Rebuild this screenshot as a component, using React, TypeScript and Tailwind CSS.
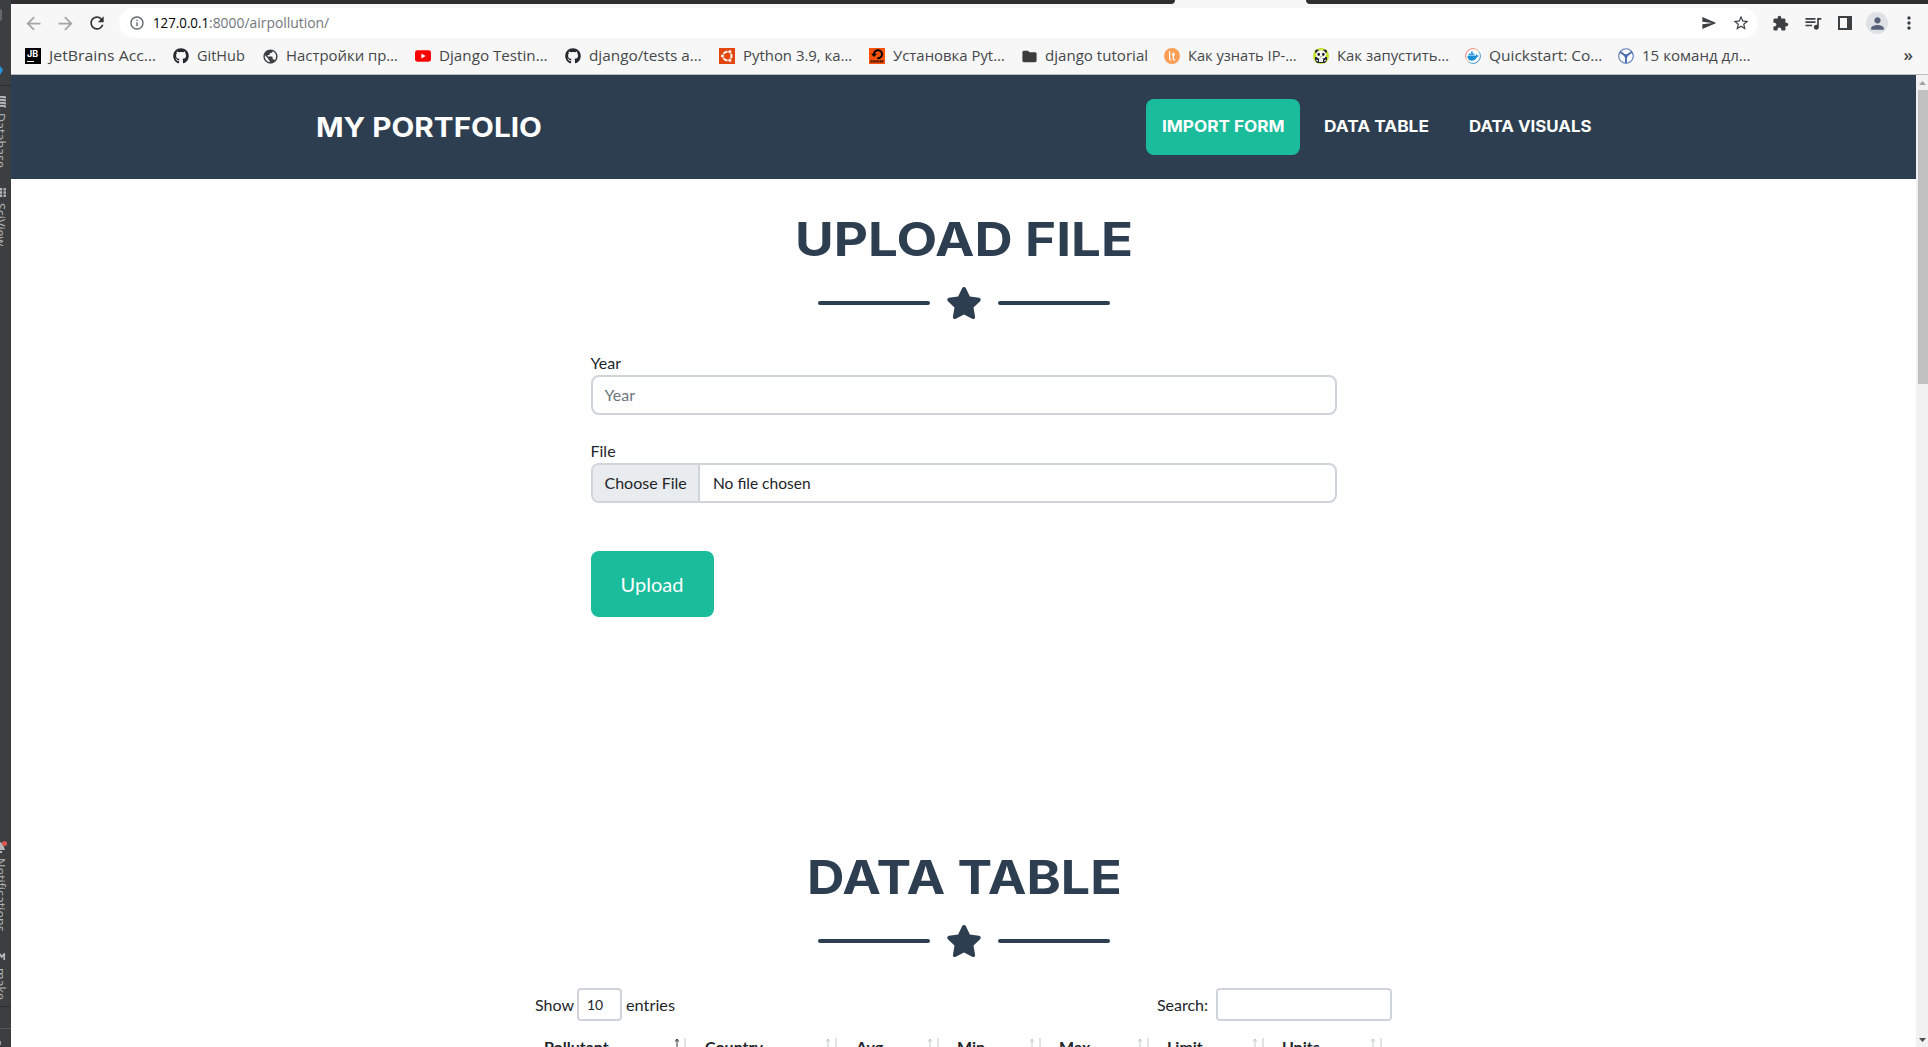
import { useLayoutEffect, useRef, useState, type ReactNode } from "react";
import { FaGithub, FaStar } from "react-icons/fa";
import { MdArrowBack, MdArrowForward, MdRefresh, MdInfoOutline, MdSend, MdStarBorder, MdExtension, MdQueueMusic, MdMoreVert, MdPerson, MdPublic, MdFolder } from "react-icons/md";

/* Text that is stretched horizontally to fill a given width. */
function Fit({ w, className = "", children }: { w: number; className?: string; children: ReactNode }) {
  const ref = useRef<HTMLSpanElement>(null);
  const [scale, setScale] = useState(1);
  useLayoutEffect(() => {
    if (ref.current) setScale(w / ref.current.offsetWidth);
  }, [w]);
  return (
    <span className="inline-flex shrink-0" style={{ width: w }}>
      <span ref={ref} className={"inline-block shrink-0 origin-left whitespace-nowrap " + className} style={{ transform: `scaleX(${scale})` }}>
        {children}
      </span>
    </span>
  );
}

const JetBrainsIcon = () => (
  <span className="flex h-4 w-4 flex-col bg-black pl-[2px] pt-[1px] font-['Inter'] text-[9px] font-bold leading-[9px] text-white">
    JB
    <span className="mt-[3px] h-px w-[7px] shrink-0 bg-white" />
  </span>
);
const YoutubeIcon = () => (
  <svg viewBox="0 0 16 16" className="h-4 w-4"><rect y="2.3" width="16" height="11.4" rx="2.4" fill="#f00" /><path d="M6.4 5.6v4.8L10.6 8z" fill="#fff" /></svg>
);
const UbuntuIcon = () => (
  <svg viewBox="0 0 16 16" className="h-4 w-4">
    <rect width="16" height="16" fill="#e2470f" />
    <circle cx="8.3" cy="8" r="4.2" fill="none" stroke="#fff" strokeWidth="2" />
    <g fill="#fff" stroke="#e2470f" strokeWidth="1"><circle cx="3.4" cy="8" r="2" /><circle cx="10.8" cy="3.7" r="2" /><circle cx="10.8" cy="12.3" r="2" /></g>
  </svg>
);
const SetupIcon = () => (
  <svg viewBox="0 0 16 16" className="h-4 w-4">
    <rect width="16" height="16" fill="#f95208" />
    <path d="M5 6.2a4 4 0 1 1 3.2 3.9" fill="none" stroke="#000" strokeWidth="1.9" />
    <path d="M2 5.7h6L5 9z" fill="#000" />
    <path d="M1.5 13.4h13" stroke="#3a1200" strokeWidth="2.4" strokeDasharray="1.4 .5" />
  </svg>
);
const LtIcon = () => (
  <svg viewBox="0 0 16 16" className="h-4 w-4">
    <circle cx="8" cy="8" r="8" fill="#ff9f55" />
    <path d="M5.6 3.3v7.3q0 1.6 1.4 1.6M9.3 4.5v6q0 1.7 1.9 1.4M7.7 6.5h3.4" fill="none" stroke="#fff" strokeWidth="1.3" />
  </svg>
);
const PandaIcon = () => (
  <svg viewBox="0 0 16 16" className="h-4 w-4">
    <circle cx="8" cy="8" r="8" fill="#c6e02c" />
    <path d="M2 9h12v3l-2 3H4l-2-3z" fill="#232a3a" />
    <circle cx="4" cy="3.4" r="2" fill="#222" /><circle cx="12" cy="3.4" r="2" fill="#222" />
    <ellipse cx="8" cy="6.6" rx="5.2" ry="4.4" fill="#f4f4f4" />
    <ellipse cx="5.7" cy="6.3" rx="1.3" ry="1.6" fill="#222" /><ellipse cx="10.3" cy="6.3" rx="1.3" ry="1.6" fill="#222" />
    <path d="M7.2 8.4h1.6L8 9.4z" fill="#222" /><path d="M6 11h4v3H6z" fill="#eee" /><path d="M3 12l2 1M13 12l-2 1" stroke="#fff" />
  </svg>
);
const DockerIcon = () => (
  <svg viewBox="0 0 16 16" className="h-4 w-4">
    <defs><linearGradient id="ring" x1="0" y1="0" x2="1" y2="1"><stop stopColor="#f0506e" /><stop offset=".45" stopColor="#f8b48a" /><stop offset=".6" stopColor="#52c5dc" /><stop offset="1" stopColor="#314a9c" /></linearGradient></defs>
    <circle cx="8" cy="8" r="7.4" fill="#fff" stroke="url(#ring)" />
    <path d="M2.3 7.8h8.5q0-1 .5-1.8.9.6 1 1.5 1-.1 1.7.3-.6 1-2 1.1-1.5 3.8-5.6 3.8-3.7 0-4.1-4.9z" fill="#1b8fd6" />
    <path d="M3.6 5.6h5.9v2H3.6zM6 3.5h1.9v2H6z" fill="#3aa4e3" />
  </svg>
);
const WheelIcon = () => (
  <svg viewBox="0 0 16 16" className="h-4 w-4">
    <circle cx="8" cy="8" r="7.3" fill="#fbfcff" stroke="#5878b4" strokeWidth="1.1" />
    <path d="M2 3.8l4.7 3.5M14 3.8L9.3 7.3M8 9v6.2" stroke="#4669ac" strokeWidth="1.8" /><circle cx="8" cy="7.8" r="1.9" fill="#4669ac" />
  </svg>
);
const GithubIcon = () => <FaGithub className="h-4 w-4 text-[#24292f]" />;
const GlobeIcon = () => <MdPublic className="h-[17px] w-[17px] shrink-0 text-[#3c4043]" />;
const FolderIcon = () => <MdFolder className="h-[17px] w-[17px] shrink-0 text-[#3c3c3c]" />;

/* pitch: distance to the next bookmark, w: label width */
const bookmarks = [
  { icon: JetBrainsIcon, label: "JetBrains Acc…", w: 107, pitch: 148 },
  { icon: GithubIcon, label: "GitHub", w: 48, pitch: 89 },
  { icon: GlobeIcon, label: "Настройки пр…", w: 112, pitch: 153 },
  { icon: YoutubeIcon, label: "Django Testin…", w: 109, pitch: 150 },
  { icon: GithubIcon, label: "django/tests a…", w: 113, pitch: 154 },
  { icon: UbuntuIcon, label: "Python 3.9, ка…", w: 109, pitch: 150 },
  { icon: SetupIcon, label: "Установка Pyt…", w: 112, pitch: 152 },
  { icon: FolderIcon, label: "django tutorial", w: 103, pitch: 143 },
  { icon: LtIcon, label: "Как узнать IP-…", w: 109, pitch: 149 },
  { icon: PandaIcon, label: "Как запустить…", w: 112, pitch: 152 },
  { icon: DockerIcon, label: "Quickstart: Co…", w: 113, pitch: 153 },
  { icon: WheelIcon, label: "15 команд дл…", w: 108, pitch: 149 },
];

function SideLabel({ text, className }: { text: string; className: string }) {
  return (
    <div className={"flex w-[11px] shrink-0 " + className}>
      <span className="-ml-[9px] shrink-0 whitespace-nowrap text-[12.5px] leading-[18px] text-[#b4b6b8] [writing-mode:vertical-rl]">{text}</span>
    </div>
  );
}

function IdeStrip() {
  return (
    <aside className="flex h-full w-[11px] shrink-0 flex-col overflow-hidden bg-[#3c3f41] font-['Open_Sans',sans-serif]">
      <div className="mt-[9px] h-3 w-[2px] shrink-0 rounded-r-full bg-[#66686a]" />
      <svg viewBox="0 0 4 10" className="mt-[45px] h-[10px] w-1 shrink-0"><path d="M0 0l3 4-3 5z" fill="#2597e0" /></svg>
      <div className="mt-[9px] h-px shrink-0 bg-[#2b2d2e]" />
      <svg viewBox="0 0 6 13" className="mt-[10px] h-[13px] w-[6px] shrink-0"><path d="M0 1q3-1 6 1M0 4q3-1 6 1M0 7q3-1 6 1M0 10q3-1 6 1" stroke="#b5b7b9" strokeWidth="2" fill="none" /></svg>
      <SideLabel text="Database" className="mt-[4px] h-[54px]" />
      <svg viewBox="0 0 6 9" className="mt-[21px] h-[9px] w-[6px] shrink-0"><path d="M1 0v9M4.7 0v9" stroke="#b5b7b9" strokeWidth="2.3" strokeDasharray="2.4 .9" /></svg>
      <SideLabel text="SciView" className="mt-[6px] h-[50px]" />
      <svg viewBox="0 0 8 14" className="mt-[587px] h-[14px] w-2 shrink-0"><path d="M0 2l3 2 2 6H0zM0 11h2v2H0z" fill="#b5b7b9" /><circle cx="4.5" cy="3.5" r="2.6" fill="#d9534f" /></svg>
      <SideLabel text="Notifications" className="mt-[4px] h-[80px]" />
      <svg viewBox="0 0 6 8" className="mt-[15px] h-2 w-[6px] shrink-0"><path d="M0 1l1.7 3L4.2 1v6" stroke="#b5b7b9" strokeWidth="1.7" fill="none" /></svg>
      <SideLabel text="make" className="mt-[7px] h-[34px]" />
      <div className="mt-[4px] h-px shrink-0 bg-[#2b2d2e]" />
      <div className="mt-[21px] h-px shrink-0 bg-[#55585a]" />
      <div className="mt-[12px] h-1 w-px shrink-0 bg-[#999]" />
    </aside>
  );
}

function BrowserBar() {
  return (
    <div className="h-[75px] shrink-0 border-b border-[#b9bcbc] bg-[#f7f7f7] font-['Open_Sans','Noto_Sans',sans-serif]">
      <div className="flex h-1 justify-between">
        <div className="w-[1164px] rounded-br-[4px] bg-[#302e30]" />
        <div className="w-[622px] rounded-bl-[4px] bg-[#302e30]" />
      </div>
      <div className="flex h-[38px] items-center pl-[12px] text-[#3c4043]">
        <MdArrowBack className="h-[21px] w-[21px] shrink-0 text-[#a5a5a5]" />
        <MdArrowForward className="ml-[11px] h-[21px] w-[21px] shrink-0 text-[#a5a5a5]" />
        <MdRefresh className="ml-[11px] h-[20px] w-[20px] shrink-0 text-[#333]" />
        <div className="ml-[12px] flex h-[30px] w-[1639px] shrink-0 items-center rounded-full bg-white pl-[10px]">
          <MdInfoOutline className="h-4 w-4 text-[#5f6368]" />
          <span className="ml-[8px] flex text-sm">
            <Fit w={56} className="text-black">127.0.0.1</Fit>
            <Fit w={120} className="text-[#74777b]">:8000/airpollution/</Fit>
          </span>
          <MdSend className="ml-auto h-4 w-4" />
          <MdStarBorder className="ml-[15px] mr-[8px] h-[18px] w-[18px]" />
        </div>
        <MdExtension className="ml-[14px] h-[17px] w-[17px] shrink-0" />
        <MdQueueMusic className="ml-[14px] h-5 w-5 shrink-0" />
        <svg viewBox="0 0 14 14" className="ml-[15px] h-[14px] w-[14px] shrink-0"><path d="M1 1h12v12H1z" stroke="currentColor" strokeWidth="2" fill="none" /><path d="M9 1h4v12H9z" fill="currentColor" /></svg>
        <span className="ml-[14px] flex h-[22px] w-[22px] shrink-0 items-center justify-center rounded-full bg-[#dee1e6]"><MdPerson className="h-[19px] w-[19px] text-[#566078]" /></span>
        <MdMoreVert className="ml-[11px] h-5 w-5 shrink-0" />
      </div>
      <div className="flex h-[28px] items-center pl-[14px] text-[14.5px] text-[#45474a]">
        {bookmarks.map((b, i) => (
          <div key={i} className="flex shrink-0 items-center" style={{ width: b.pitch }}>
            <span className="mr-2 flex h-4 w-4 shrink-0 items-center justify-center"><b.icon /></span>
            <Fit w={b.w}>{b.label}</Fit>
          </div>
        ))}
        <span className="ml-auto mr-[15px] pb-0.5 text-[17px] font-semibold">»</span>
      </div>
    </div>
  );
}

function SectionTitle({ text, w }: { text: string; w: number }) {
  return (
    <div className="flex flex-col items-center pl-px text-[#2c3e50]">
      <h2 className="flex h-[58px] items-center font-['Inter'] text-[46px] font-bold leading-none">
        <Fit w={w}>{text}</Fit>
      </h2>
      <div className="mt-[18px] flex h-[34px] items-center">
        <div className="h-1 w-28 rounded-full bg-[#2c3e50]" />
        <FaStar className="mx-4 h-9 w-9" />
        <div className="h-1 w-28 rounded-full bg-[#2c3e50]" />
      </div>
    </div>
  );
}

function SortArrows({ active }: { active?: boolean }) {
  return (
    <svg viewBox="0 0 15 14" className="mt-[3px] h-[14px] w-[15px] shrink-0" fill="none">
      <path d="M3 14V1" stroke={active ? "#333" : "#c4c6c8"} />
      <path d="M1.2 3.6L3 1l1.8 2.6" stroke={active ? "#333" : "#c4c6c8"} />
      <path d="M11 0v12M9 9.5l2 3 2-3" stroke="#c4c6c8" />
    </svg>
  );
}

const columns = [
  { name: "Pollutant", text: "w-[130px]", cell: "w-[161px]" },
  { name: "Country", text: "w-[120px]", cell: "w-[151px]" },
  { name: "Avg", text: "w-[71px]", cell: "w-[101px]" },
  { name: "Min", text: "w-[72px]", cell: "w-[102px]" },
  { name: "Max", text: "w-[78px]", cell: "w-[108px]" },
  { name: "Limit", text: "w-[85px]", cell: "w-[115px]" },
  { name: "Units", text: "w-[88px]", cell: "w-[104px]" },
];

function Page() {
  return (
    <main className="min-w-0 grow overflow-hidden bg-white font-['Lato',sans-serif] text-base text-[#212529]">
      <nav className="flex h-[104px] items-start justify-between bg-[#2c3e50] pl-[305px] pr-[308px] pt-6 font-['Inter'] font-bold text-white">
        <span className="flex h-[58px] items-center text-[26.5px]"><Fit w={226}>MY PORTFOLIO</Fit></span>
        <div className="flex text-[15.5px]">
          <a className="flex h-[56px] w-[154px] items-center justify-center rounded-lg bg-[#1abc9c]"><Fit w={123}>IMPORT FORM</Fit></a>
          <a className="ml-2 flex h-[56px] w-[137px] items-center justify-center"><Fit w={105}>DATA TABLE</Fit></a>
          <a className="ml-2 flex h-[56px] w-[155px] items-center justify-center"><Fit w={123}>DATA VISUALS</Fit></a>
        </div>
      </nav>
      <section className="h-[638px] pt-[31px]">
        <SectionTitle text="UPLOAD FILE" w={338} />
        <form className="mx-auto mt-[31px] w-[746px]">
          <label className="block h-6 leading-6">Year</label>
          <div className="flex h-10 items-center rounded-lg border-2 border-[#ced4da] px-3 text-[#6c757d]">Year</div>
          <label className="mt-6 block h-6 leading-6">File</label>
          <div className="flex h-10 items-center overflow-hidden rounded-lg border-2 border-[#ced4da]">
            <span className="flex h-full w-[107px] items-center border-r-2 border-[#ced4da] bg-[#e9ecef] pl-3">Choose File</span>
            <span className="ml-[13px]"><Fit w={98}>No file chosen</Fit></span>
          </div>
          <div className="mt-12 flex h-[66px] w-[123px] items-center justify-center rounded-lg bg-[#1abc9c] text-xl text-white">Upload</div>
        </form>
      </section>
      <section className="pt-[31px]">
        <SectionTitle text="DATA TABLE" w={315} />
        <div className="mx-auto mt-[30px] w-[857px]">
          <div className="flex h-[33px] items-center">
            <span>Show</span>
            <span className="ml-[3px] mr-1 flex h-[33px] w-[45px] items-center rounded border-2 border-[#ced4da] pl-2 text-sm">10</span>
            <Fit w={49}>entries</Fit>
            <span className="ml-auto">Search:</span>
            <span className="ml-2 h-[33px] w-[176px] rounded border-2 border-[#ced4da]" />
          </div>
          <div className="mt-[14px] flex h-[30px] pl-[9px] font-bold leading-6">
            {columns.map((c, i) => (
              <div key={c.name} className={"flex shrink-0 " + c.cell}>
                <span className={"shrink-0 " + c.text}>{c.name}</span>
                <SortArrows active={i === 0} />
              </div>
            ))}
          </div>
        </div>
      </section>
    </main>
  );
}

export default function App() {
  return (
    <div className="flex h-[1047px] w-[1928px] overflow-hidden bg-white">
      <IdeStrip />
      <div className="flex min-w-0 grow flex-col">
        <BrowserBar />
        <div className="flex min-h-0 grow">
          <Page />
          <div className="flex w-3 shrink-0 flex-col bg-[#f1f1f1]">
            <svg viewBox="0 0 12 15" className="h-[15px] w-3"><path d="M3 10h7L6.5 6z" fill="#a3a3a3" /></svg>
            <div className="ml-[2px] h-[294px] bg-[#c1c1c1]" />
            <svg viewBox="0 0 12 15" className="mt-auto h-[15px] w-3"><path d="M3 6h7l-3.5 4z" fill="#505050" /></svg>
          </div>
        </div>
      </div>
    </div>
  );
}
